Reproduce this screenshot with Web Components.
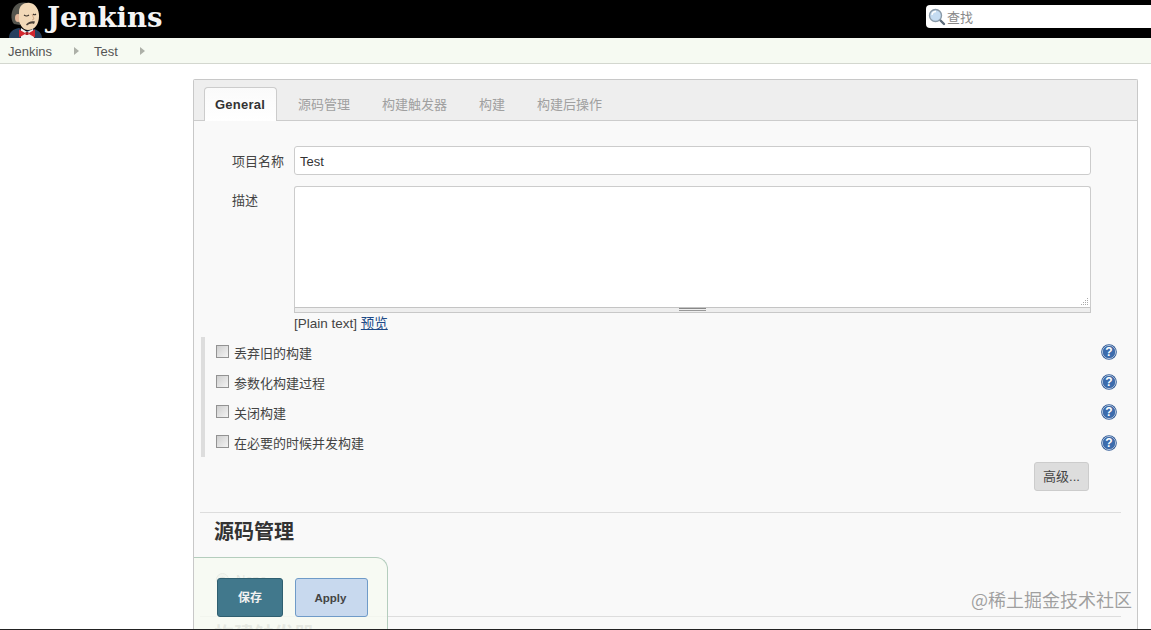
<!DOCTYPE html>
<html lang="zh">
<head>
<meta charset="utf-8">
<title>Test Config [Jenkins]</title>
<style>
  html, body { margin: 0; height: 100%; overflow: hidden; background: #fff; }
  body {
    display: flex;
    flex-direction: column;
    height: 630px;
    font: 13px "Liberation Sans", "Noto Sans CJK SC", sans-serif;
    color: #333;
  }
  .edge { flex: none; height: 1px; background: #222; }
</style>
</head>
<body>
<jk-header></jk-header>
<jk-breadcrumbs>
  <jk-crumb>Jenkins</jk-crumb>
  <jk-crumb>Test</jk-crumb>
</jk-breadcrumbs>
<jk-main>
  <jk-tabbar>
    <jk-tab active>General</jk-tab>
    <jk-tab>源码管理</jk-tab>
    <jk-tab>构建触发器</jk-tab>
    <jk-tab>构建</jk-tab>
    <jk-tab>构建后操作</jk-tab>
  </jk-tabbar>
  <jk-form></jk-form>
</jk-main>
<div class="edge"></div>
<jk-bottom-bar></jk-bottom-bar>
<jk-watermark>@稀土掘金技术社区</jk-watermark>

<script>
class JkHeader extends HTMLElement {
  constructor() {
    super();
    this.attachShadow({ mode: 'open' });
    this.shadowRoot.innerHTML = `
      <style>
        :host { display: flex; flex: none; height: 38px; background: #000; align-items: flex-start; justify-content: space-between; overflow: hidden; }
        .logo { display: flex; align-items: flex-start; }
        svg.butler { display: block; margin: 0 0 0 8px; }
        .name {
          margin: -2px 0 0 3px;
          color: #f4f4f4;
          font: bold 27.500px/38px "DejaVu Serif", serif;
        }
        .search {
          box-sizing: border-box;
          width: 225px; height: 23px; margin-top: 5px;
          background: #fff;
          border-radius: 4px 0 0 4px;
          display: flex; align-items: center; gap: 1px;
          padding-left: 2px;
          color: #888;
          font: 13px "Liberation Sans", "Noto Sans CJK SC", sans-serif;
        }
        .search span { margin-top: -1px; }
      </style>
      <div class="logo">
        <svg class="butler" width="36" height="38" viewBox="0 0 36 38">
          <path d="M1 38c0-6 4-9 10-10l7 3 8-2c4 1 8 4 8 9z" fill="#27405f"/>
          <path d="M13 28l6 4 6-3 1 9H13z" fill="#f3f3f0"/>
          <path d="M18 33.500l-7-4v8zM20 33.500l7-4v8z" fill="#d3262e"/>
          <rect x="17.500" y="32" width="3" height="3" fill="#a81d24"/>
          <path d="M6 24C2 20 3 10 7 6c3-4 9-4 13-3-7 2-8 8-7 13l-1 9z" fill="#55554e"/>
          <ellipse cx="10" cy="18" rx="3" ry="4" fill="#e3b79a"/>
          <path d="M11 12C11 5 17 2 22 3c6 1 9 7 9 13 0 8-4 14-11 14-5 0-8-5-9-9z" fill="#f2d9b8"/>
          <path d="M16 15c1.500 1.200 3.500 1.200 5 0M25 14c1 1 2 1 3 0" stroke="#3a322b" stroke-width="1.100" fill="none"/>
          <path d="M18 24.500c3-3.500 6-3.500 9-3l-1 2.500c-3-1-5 0-7 1.500z" fill="#4a4038"/>
          <path d="M24 14l2 5-2 1" stroke="#c79c7c" stroke-width=".8" fill="none"/>
        </svg>
        <div class="name">Jenkins</div>
      </div>
      <div class="search">
        <svg width="18" height="18" viewBox="0 0 18 18">
          <path d="M11.500 11.500l4.500 4.500" stroke="#5b6a78" stroke-width="2.400" stroke-linecap="round"/>
          <circle cx="7.500" cy="7.500" r="6" fill="#c5dcf2" stroke="#8a9aa8" stroke-width="1.400"/>
          <path d="M4 7a4 4 0 0 1 4-3.500" stroke="#fff" stroke-width="1.300" fill="none"/>
        </svg>
        <span>查找</span>
      </div>`;
  }
}

class JkBreadcrumbs extends HTMLElement {
  constructor() {
    super();
    this.attachShadow({ mode: 'open' });
    this.shadowRoot.innerHTML = `
      <style>
        :host { display: flex; flex: none; box-sizing: border-box; height: 26px; padding: 1px 0 0 8px; align-items: center; background: #f6faf2; border-bottom: 1px solid #d3d7cf; }
      </style>
      <slot></slot>`;
  }
}

class JkCrumb extends HTMLElement {
  constructor() {
    super();
    this.attachShadow({ mode: 'open' });
    this.shadowRoot.innerHTML = `
      <style>
        :host { display: flex; align-items: center; color: #555; font-size: 13px; }
        i { width: 0; height: 0; margin: 0 15px 0 22px; border-left: 5px solid #adb0a8; border-top: 4px solid transparent; border-bottom: 4px solid transparent; }
      </style>
      <slot></slot><i></i>`;
  }
}

class JkMain extends HTMLElement {
  constructor() {
    super();
    this.attachShadow({ mode: 'open' });
    this.shadowRoot.innerHTML = `
      <style>
        :host {
          display: block; flex: 1; min-height: 0; overflow: hidden;
          box-sizing: border-box;
          width: 945px;
          margin: 15px 0 0 193px;
          background: #f9f9f9;
          border: 1px solid #c8c8c8;
          border-bottom: 0;
          border-radius: 2px 2px 0 0;
        }
      </style>
      <slot></slot>`;
  }
}

class JkTabbar extends HTMLElement {
  constructor() {
    super();
    this.attachShadow({ mode: 'open' });
    this.shadowRoot.innerHTML = `
      <style>
        :host { display: flex; box-sizing: border-box; height: 41px; padding: 7px 0 0 10px; background: #eee; border-bottom: 1px solid #ccc; }
      </style>
      <slot></slot>`;
  }
}

class JkTab extends HTMLElement {
  constructor() {
    super();
    this.attachShadow({ mode: 'open' });
    this.shadowRoot.innerHTML = `
      <style>
        :host { display: block; box-sizing: border-box; height: 34px; padding: 0 10px; margin-right: 10px; border: 1px solid transparent; border-bottom: 0; color: #a0a0a0; line-height: 33px; font-size: 13px; }
        :host([active]) { width: 73px; background: linear-gradient(#fafafa, #fff); border-color: #ccc; border-radius: 4px 4px 0 0; color: #333; font-weight: bold; letter-spacing: .25px; }
      </style>
      <slot></slot>`;
  }
}

class JkHelp extends HTMLElement {
  constructor() {
    super();
    this.attachShadow({ mode: 'open' });
    this.shadowRoot.innerHTML = `
      <style>
        :host { display: block; width: 16px; height: 16px; }
        svg { display: block; }
        text { font: bold 12px "Liberation Sans", sans-serif; fill: #fff; }
      </style>
      <svg width="16" height="16" viewBox="0 0 16 16">
        <circle cx="8" cy="8" r="7.800" fill="#2f5a97"/>
        <circle cx="8" cy="8" r="6.500" fill="none" stroke="#dbe5f2" stroke-width=".8"/>
        <circle cx="8" cy="8" r="5.800" fill="#3c6cad"/>
        <text x="8" y="12.300" text-anchor="middle">?</text>
      </svg>`;
  }
}

class JkOption extends HTMLElement {
  constructor() {
    super();
    this.attachShadow({ mode: 'open' });
    this.shadowRoot.innerHTML = `
      <style>
        :host { display: flex; align-items: center; height: 30px; color: #444; font-size: 13px; }
        i { box-sizing: border-box; width: 13px; height: 13px; margin: -2px 5px 0 0; background: linear-gradient(135deg, #cfcfcf, #f4f4f4); border: 1px solid #939393; }
        span { flex: 1; }
        jk-help { margin: -1px 4px 0 0; }
        :host(:last-child) jk-help { margin-top: 1px; }
      </style>
      <i></i><span><slot></slot></span><jk-help></jk-help>`;
  }
}

class JkForm extends HTMLElement {
  constructor() {
    super();
    this.attachShadow({ mode: 'open' });
    this.shadowRoot.innerHTML = `
      <style>
        :host { display: block; padding: 25px 16px 0 6px; }
        .field { display: flex; margin: 0 30px 11px 0; }
        .field label { flex: none; width: 94px; height: 29px; padding-left: 32px; box-sizing: border-box; color: #444; line-height: 31px; }
        .input { box-sizing: border-box; flex: 1; height: 29px; padding: 1px 0 0 5px; background: #fff; border: 1px solid #ccc; border-radius: 3px; color: #333; line-height: 27px; }
        .desc { align-items: flex-start; margin-bottom: 3px; }
        .desc label { line-height: 29px; }
        .desc > div { flex: 1; }
        .area { position: relative; box-sizing: border-box; height: 122px; background: #fff; border: 1px solid #ccc; border-bottom-color: #c4c4c4; border-radius: 3px 3px 0 0; }
        .area svg { position: absolute; right: 1px; bottom: 1px; }
        .grip { box-sizing: border-box; height: 5px; background: #eee; border: 1px solid #c8c8c8; border-top: 0; display: flex; justify-content: center; }
        .grip i { width: 27px; height: 3px; border-top: 1px solid #888; border-bottom: 1px solid #999; box-sizing: border-box; }
        .note { height: 19px; line-height: 21px; color: #444; font-size: 13.500px; }
        .note a { color: #204a87; text-decoration: underline; }
        .opts { margin: 5px 0 0 1px; padding-left: 11px; border-left: 4px solid #ddd; }
        .adv { display: flex; justify-content: flex-end; padding: 5px 32px 0 0; }
        .btn { box-sizing: border-box; width: 55px; height: 29px; background: #ddd; border: 1px solid #ccc; border-radius: 3px; color: #444; text-align: center; line-height: 28px; }
        hr { height: 1px; margin: 21px 0 0 0; border: 0; background: #ddd; }
        h2 { margin: 6px 0 0 14px; height: 26px; color: #333; font: bold 20px/26px "Liberation Sans", "Noto Sans CJK SC", sans-serif; }
        .radio { display: flex; align-items: center; gap: 7px; height: 20px; margin: 24px 0 0 16px; color: #8d8d8d; }
        .radio i { box-sizing: border-box; width: 13px; height: 13px; border-radius: 50%; border: 1px solid #aaa; background: radial-gradient(#888 35%, #e4e4e4 40%); }
        .next { height: 1px; background: #ddd; margin-top: 27px; }
        h3 { margin: 5px 0 0 14px; color: #999; font: bold 20px/26px "Liberation Sans", "Noto Sans CJK SC", sans-serif; }
      </style>
      <div class="field"><label>项目名称</label><div class="input">Test</div></div>
      <div class="field desc">
        <label>描述</label>
        <div>
          <div class="area">
            <svg width="8" height="8" viewBox="0 0 8 8" fill="#aaa"><rect x="6" y="0" width="1" height="1"/><rect x="4" y="2" width="1" height="1"/><rect x="6" y="2" width="1" height="1"/><rect x="2" y="4" width="1" height="1"/><rect x="4" y="4" width="1" height="1"/><rect x="6" y="4" width="1" height="1"/><rect x="0" y="6" width="1" height="1"/><rect x="2" y="6" width="1" height="1"/><rect x="4" y="6" width="1" height="1"/><rect x="6" y="6" width="1" height="1"/></svg>
          </div>
          <div class="grip"><i></i></div>
          <div class="note">[Plain text] <a>预览</a></div>
        </div>
      </div>
      <div class="opts">
        <jk-option>丢弃旧的构建</jk-option>
        <jk-option>参数化构建过程</jk-option>
        <jk-option>关闭构建</jk-option>
        <jk-option>在必要的时候并发构建</jk-option>
      </div>
      <div class="adv"><div class="btn">高级...</div></div>
      <hr>
      <h2>源码管理</h2>
      <div class="radio"><i></i>None</div>
      <div class="next"></div>
      <h3>构建触发器</h3>`;
  }
}

class JkBottomBar extends HTMLElement {
  constructor() {
    super();
    this.attachShadow({ mode: 'open' });
    this.shadowRoot.innerHTML = `
      <style>
        :host {
          position: absolute; left: 194px; top: 557px; width: 194px; height: 72px;
          box-sizing: border-box;
          display: flex; gap: 12px; padding: 20px 0 0 23px;
          background: rgba(246, 250, 242, .82);
          border: 1px solid #b4cdbd; border-left: 0; border-bottom: 0;
          border-radius: 0 12px 0 0;
        }
        div { box-sizing: border-box; height: 39px; border-radius: 3px; font-weight: bold; font-size: 12px; text-align: center; line-height: 38px; }
        .save { width: 66px; background: #41788c; border: 1px solid #2f5f70; color: #f2f2f2; }
        .apply { width: 73px; padding-right: 2px; background: #c8d9ee; border: 1px solid #6f9bc8; color: #444; font-size: 11.500px; }
      </style>
      <div class="save">保存</div>
      <div class="apply">Apply</div>`;
  }
}

class JkWatermark extends HTMLElement {
  constructor() {
    super();
    this.attachShadow({ mode: 'open' });
    this.shadowRoot.innerHTML = `
      <style>
        :host { position: absolute; left: 971px; top: 587px; color: rgba(130, 130, 130, .75); font: 18px/24px "Noto Sans CJK SC", sans-serif; white-space: nowrap; }
      </style>
      <slot></slot>`;
  }
}

customElements.define('jk-header', JkHeader);
customElements.define('jk-breadcrumbs', JkBreadcrumbs);
customElements.define('jk-crumb', JkCrumb);
customElements.define('jk-main', JkMain);
customElements.define('jk-tabbar', JkTabbar);
customElements.define('jk-tab', JkTab);
customElements.define('jk-help', JkHelp);
customElements.define('jk-option', JkOption);
customElements.define('jk-form', JkForm);
customElements.define('jk-bottom-bar', JkBottomBar);
customElements.define('jk-watermark', JkWatermark);
</script>
</body>
</html>
